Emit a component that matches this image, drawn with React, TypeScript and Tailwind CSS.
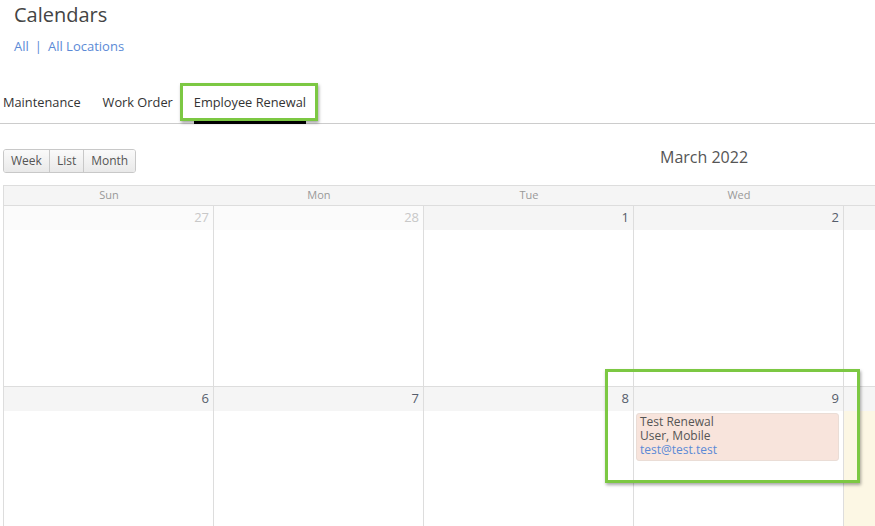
import React from "react";

const cols = ["Sun", "Mon", "Tue", "Wed", ""];

function DayCell({ n, other, today, children }: { n: string; other?: boolean; today?: boolean; children?: React.ReactNode }) {
  return (
    <div className="flex h-[180px] w-[210px] shrink-0 flex-col border-l border-[#dddddd]">
      <div className={`flex h-[24px] items-center justify-end pr-[4px] text-[13px] ${other ? "bg-[#fbfbfb] text-[#c8c8c8]" : "bg-[#f5f5f5] text-[#555d6b]"}`}>
        {n}
      </div>
      <div className={`flex-1 ${today ? "bg-[#fcf7e4]" : "bg-white"}`}>{children}</div>
    </div>
  );
}

export default function App() {
  return (
    <div className="relative h-[526px] w-[875px] overflow-hidden bg-white text-[#333]" style={{ fontFamily: '"Open Sans", "Liberation Sans", sans-serif' }}>
      <div className="pl-[14px] pt-[1px] text-[20px] leading-[28px] text-[#444]">Calendars</div>
      <div className="mt-[8px] flex items-center pl-[14px] text-[13px] leading-[18px] text-[#5b8ad6]">
        <span>All</span>
        <span className="mx-[6px]">|</span>
        <span>All Locations</span>
      </div>
      <div className="mt-[35px] flex border-b border-[#cccccc] pl-[3px] text-[12.8px] text-[#333]">
        <div className="mr-[22px] h-[33px] leading-[24px]">Maintenance</div>
        <div className="mr-[21px] h-[33px] leading-[24px]">Work Order</div>
        <div className="relative h-[33px] leading-[24px]">
          Employee Renewal
          <div className="absolute bottom-[-1px] left-0 right-0 h-[3px] bg-black" />
        </div>
      </div>
      <div className="relative mt-[25px] flex items-start pl-[3px]">
        <div className="flex h-[24px] overflow-hidden rounded-[3px] border border-[#c8c8c8] text-[12px] text-[#555]">
          <div className="flex items-center bg-gradient-to-b from-[#fafafa] to-[#e9e9e9] px-[7px]">Week</div>
          <div className="flex items-center border-l border-[#c8c8c8] bg-gradient-to-b from-[#fafafa] to-[#e9e9e9] px-[7px]">List</div>
          <div className="flex items-center border-l border-[#c8c8c8] bg-gradient-to-b from-[#fafafa] to-[#e9e9e9] px-[7px]">Month</div>
        </div>
        <div className="absolute left-[660px] top-[-4px] text-[16px] leading-[24px] text-[#555]">March 2022</div>
      </div>
      <div className="ml-[3px] mt-[12px] w-[900px]">
        <div className="flex h-[21px] border-y border-l border-[#dddddd] bg-[#f5f5f5] text-[11px] text-[#999]">
          {cols.map((c, i) => (
            <div key={i} className="flex w-[210px] shrink-0 items-center justify-center">{c}</div>
          ))}
        </div>
        <div className="flex border-b border-[#dddddd]">
          <DayCell n="27" other />
          <DayCell n="28" other />
          <DayCell n="1" />
          <DayCell n="2" />
          <DayCell n="" />
        </div>
        <div className="flex">
          <DayCell n="6" />
          <DayCell n="7" />
          <DayCell n="8" />
          <DayCell n="9">
            <div className="ml-[2px] mr-[4px] mt-[2px] rounded-[3px] border border-[#eaddd6] bg-[#f8e4dc] px-[3px] pb-[3px] pt-[1px] text-[12px] leading-[14px] text-[#555]">
              <div>Test Renewal</div>
              <div>User, Mobile</div>
              <div className="text-[#5b8ad6]">test@test.test</div>
            </div>
          </DayCell>
          <DayCell n="" today />
        </div>
      </div>
      <div className="absolute left-[180px] top-[83px] h-[38px] w-[138px] border-[3px] border-[#7cc843] shadow-[1px_2px_3px_rgba(0,0,0,0.35)]" />
      <div className="absolute left-[605px] top-[369px] h-[114px] w-[255px] border-[3px] border-[#7cc843] shadow-[1px_2px_3px_rgba(0,0,0,0.35)]" />
    </div>
  );
}
